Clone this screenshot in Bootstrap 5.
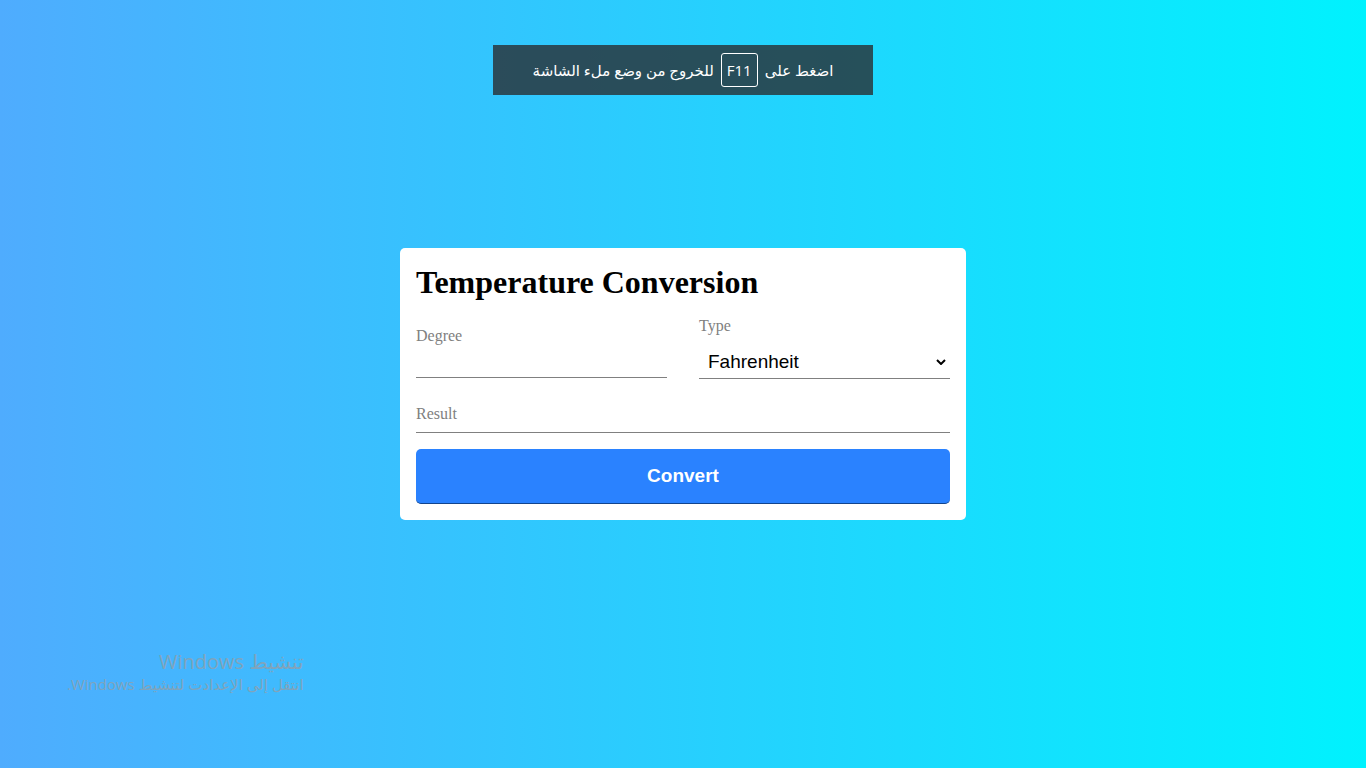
<!DOCTYPE html>
<html lang="en">
<head>
<meta charset="utf-8">
<meta name="viewport" content="width=device-width, initial-scale=1">
<title>Temperature Conversion</title>
<link href="https://cdn.jsdelivr.net/npm/bootstrap@5.3.0/dist/css/bootstrap.min.css" rel="stylesheet">
<style>
body { background: linear-gradient(to right, #4facfe, #00f2fe) fixed; font-family: "Liberation Serif", serif; }
.converter { max-width: 566px; border-radius: 5px; }
.converter h1 { font-size: 32px; line-height: 36px; }
.converter label { color: gray; font-size: 16px; line-height: 20px; }
.field-pair { column-gap: 32px; }
.line-field { border: 0; border-bottom: 1px solid gray; border-radius: 0; background-color: transparent; color: #000; font-family: "Liberation Sans", sans-serif; font-size: 19px; line-height: 24px; }
.degree-input { height: 32px; }
.type-select { height: 35px; padding: 2px 24px 0 9px; background-size: 10px 6px; background-position: right 4px top 15px;
  background-image: url("data:image/svg+xml,%3csvg xmlns='http://www.w3.org/2000/svg' viewBox='0 0 10 6'%3e%3cpath d='M1 1l4 4 4-4' fill='none' stroke='%23000' stroke-width='2'/%3e%3c/svg%3e"); }
.result-field { border-bottom: 1px solid gray; height: 38px; padding-top: 9px; }
.btn-convert { --bs-btn-color: #fff; --bs-btn-bg: #2a82ff; --bs-btn-hover-color: #fff; --bs-btn-hover-bg: #1d74ef; border: 0; border-bottom: 1px solid #12448c; border-radius: 5px; height: 55px; font: bold 19px "Liberation Sans", sans-serif; }
.hint { top: 45px; width: 380px; height: 50px; gap: 7px; background: rgba(41, 41, 44, .78); color: #fff; font: 15px "Open Sans", "DejaVu Sans", sans-serif; }
.hint kbd { border: 1px solid #fff; border-radius: 3px; background: none; color: #fff; font: inherit; line-height: 32px; padding: 0 5px; }
.watermark { left: 67px; bottom: 74px; color: #80a4bc; font-family: "Open Sans", "DejaVu Sans", sans-serif; }
.watermark-title { font-size: 20px; line-height: 24px; }
.watermark-text { font-size: 15px; line-height: 20px; }
</style>
</head>
<body class="min-vh-100 d-flex align-items-center justify-content-center">
<main class="converter bg-white p-3 w-100">
  <form class="d-flex flex-column gap-3">
    <h1 class="m-0 fw-bold text-black">Temperature Conversion</h1>
    <div class="field-pair d-flex align-items-center">
      <div class="w-50 pt-2">
        <label class="d-block" for="degree">Degree</label>
        <input class="form-control line-field degree-input p-0" type="text" id="degree">
      </div>
      <div class="w-50">
        <label class="d-block mb-2" for="type">Type</label>
        <select class="form-select line-field type-select" id="type"><option>Fahrenheit</option><option>Celsius</option></select>
      </div>
    </div>
    <div class="result-field d-flex gap-2">
      <label for="result">Result</label><output id="result"></output>
    </div>
    <button class="btn btn-convert w-100" type="button">Convert</button>
  </form>
</main>
<div class="hint position-absolute start-50 translate-middle-x d-flex align-items-center justify-content-center" dir="rtl" lang="ar">
  <span>اضغط على</span><kbd>F11</kbd><span>للخروج من وضع ملء الشاشة</span>
</div>
<div class="watermark position-absolute" dir="rtl" lang="ar">
  <div class="watermark-title">تنشيط Windows</div>
  <div class="watermark-text">انتقل إلى الإعدادت لتنشيط Windows.</div>
</div>
<script src="https://cdn.jsdelivr.net/npm/bootstrap@5.3.0/dist/js/bootstrap.bundle.min.js"></script>
</body>
</html>
